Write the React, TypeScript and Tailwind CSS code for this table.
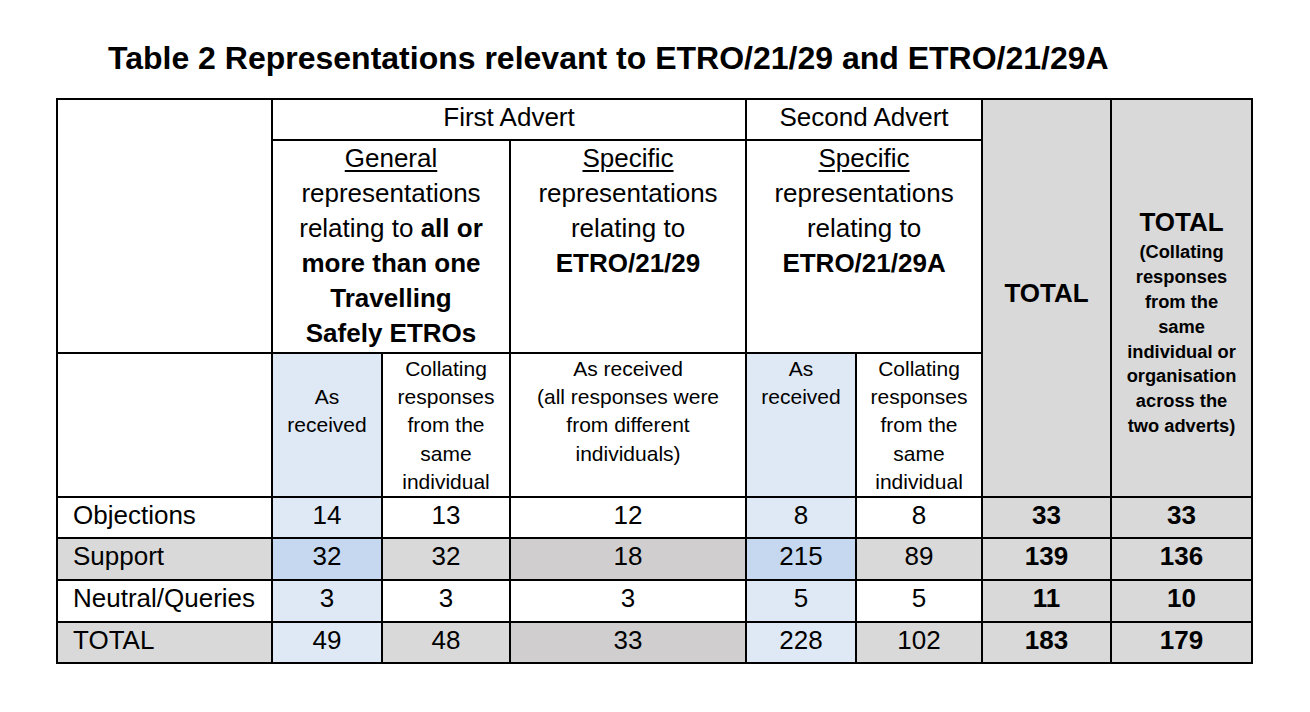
const LB = "bg-[#dfe9f5]";
const BL = "bg-[#c5d8ef]";
const GR = "bg-[#d9d9d9]";
const DG = "bg-[#d0cece]";

type Row = { label: string; labelBg: string; h: string; cells: [string, string][]; };

const rows: Row[] = [
  {
    label: "Objections",
    labelBg: "bg-white",
    h: "h-[41px]",
    cells: [["14", LB], ["13", "bg-white"], ["12", "bg-white"], ["8", LB], ["8", "bg-white"], ["33", GR], ["33", GR]],
  },
  {
    label: "Support",
    labelBg: GR,
    h: "h-[42px]",
    cells: [["32", BL], ["32", GR], ["18", DG], ["215", BL], ["89", GR], ["139", GR], ["136", GR]],
  },
  {
    label: "Neutral/Queries",
    labelBg: "bg-white",
    h: "h-[42px]",
    cells: [["3", LB], ["3", "bg-white"], ["3", "bg-white"], ["5", LB], ["5", "bg-white"], ["11", GR], ["10", GR]],
  },
  {
    label: "TOTAL",
    labelBg: GR,
    h: "h-[41px]",
    cells: [["49", LB], ["48", GR], ["33", DG], ["228", LB], ["102", GR], ["183", GR], ["179", GR]],
  },
];

const cell = "border-2 border-black p-0 align-top";

export default function App() {
  return (
    <div className="w-[1310px] h-[712px] bg-white text-black font-['Liberation_Sans',Arial,sans-serif]">
      <h1 className="pl-[108px] pt-[40px] text-[32px] leading-[36px] font-bold">
        Table 2 Representations relevant to ETRO/21/29 and ETRO/21/29A
      </h1>

      <table className="ml-[56px] mt-[22px] w-[1195px] table-fixed border-collapse text-[26px] leading-[35px]">
        <colgroup>
          <col className="w-[215px]" />
          <col className="w-[110px]" />
          <col className="w-[128px]" />
          <col className="w-[236px]" />
          <col className="w-[110px]" />
          <col className="w-[126px]" />
          <col className="w-[129px]" />
          <col className="w-[141px]" />
        </colgroup>
        <tbody>
          <tr className="h-[41px]">
            <td rowSpan={2} className={cell}></td>
            <td colSpan={3} className={`${cell} text-center`}>First Advert</td>
            <td colSpan={2} className={`${cell} text-center`}>Second Advert</td>
            <td rowSpan={3} className={`${cell} ${GR} !align-middle text-center font-bold pb-[10px]`}>TOTAL</td>
            <td rowSpan={3} className={`${cell} ${GR} !align-middle text-center font-bold pt-[48px]`}>
              <div>TOTAL</div>
              <div className="text-[18.3px] leading-[24.8px]">
                (Collating
                <br />
                responses
                <br />
                from the
                <br />
                same
                <br />
                individual or
                <br />
                organisation
                <br />
                across the
                <br />
                two adverts)
              </div>
            </td>
          </tr>
          <tr className="h-[213px]">
            <td colSpan={2} className={`${cell} text-center`}>
              <span className="underline underline-offset-[3px]">General</span>
              <br />
              representations
              <br />
              relating to <b>all or</b>
              <br />
              <b>more than one</b>
              <br />
              <b>Travelling</b>
              <br />
              <b>Safely ETROs</b>
            </td>
            <td className={`${cell} text-center`}>
              <span className="underline underline-offset-[3px]">Specific</span>
              <br />
              representations
              <br />
              relating to
              <br />
              <b>ETRO/21/29</b>
            </td>
            <td colSpan={2} className={`${cell} text-center`}>
              <span className="underline underline-offset-[3px]">Specific</span>
              <br />
              representations
              <br />
              relating to
              <br />
              <b>ETRO/21/29A</b>
            </td>
          </tr>
          <tr className="h-[144px] text-[21px] leading-[28.2px]">
            <td className={cell}></td>
            <td className={`${cell} ${LB} text-center pt-px`}>
              <br />
              As
              <br />
              received
            </td>
            <td className={`${cell} text-center pt-px`}>
              Collating
              <br />
              responses
              <br />
              from the
              <br />
              same
              <br />
              individual
            </td>
            <td className={`${cell} text-center pt-px`}>
              As received
              <br />
              (all responses were
              <br />
              from different
              <br />
              individuals)
            </td>
            <td className={`${cell} ${LB} text-center pt-px`}>
              As
              <br />
              received
            </td>
            <td className={`${cell} text-center pt-px`}>
              Collating
              <br />
              responses
              <br />
              from the
              <br />
              same
              <br />
              individual
            </td>
          </tr>
          {rows.map((r) => (
            <tr key={r.label} className={r.h}>
              <td className={`${cell} ${r.labelBg} pl-[15px]`}>{r.label}</td>
              {r.cells.map(([v, bg], i) => (
                <td key={i} className={`${cell} ${bg} text-center ${i >= 5 ? "font-bold" : ""}`}>
                  {v}
                </td>
              ))}
            </tr>
          ))}
        </tbody>
      </table>
    </div>
  );
}
